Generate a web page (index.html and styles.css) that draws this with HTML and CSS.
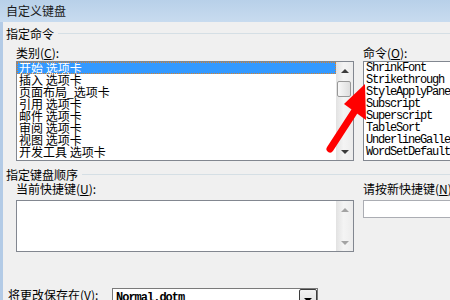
FILE: index.html
```html
<!DOCTYPE html>
<html lang="zh-CN">
<head>
    <meta charset="UTF-8">
    <title>自定义键盘</title>
    <link rel="stylesheet" href="styles.css">
</head>
<body>
    <div class="titlebar">自定义键盘</div>
    <div class="client">
        <div class="group-head">指定命令</div>
        <div class="fields">
            <div>
                <div class="label">类别(<u>C</u>):</div>
                <div class="listbox">
                    <ul class="items">
                        <li class="selected">开始 选项卡</li>
                        <li>插入 选项卡</li>
                        <li>页面布局_选项卡</li>
                        <li>引用 选项卡</li>
                        <li>邮件 选项卡</li>
                        <li>审阅 选项卡</li>
                        <li>视图 选项卡</li>
                        <li>开发工具 选项卡</li>
                    </ul>
                    <div class="vscroll">
                        <span class="btn"><i class="tri up"></i></span>
                        <span class="thumb"></span>
                        <span class="spacer"></span>
                        <span class="btn"><i class="tri down"></i></span>
                    </div>
                </div>
            </div>
            <div>
                <div class="label">命令(<u>O</u>):</div>
                <div class="listbox wide">
                    <ul class="items mono">
                        <li>ShrinkFont</li>
                        <li>Strikethrough</li>
                        <li>StyleApplyPane</li>
                        <li>Subscript</li>
                        <li>Superscript</li>
                        <li>TableSort</li>
                        <li>UnderlineGallery</li>
                        <li>WordSetDefaultFont</li>
                    </ul>
                </div>
            </div>
        </div>

        <div class="group-head second">指定键盘顺序</div>
        <div class="fields second">
            <div>
                <div class="label">当前快捷键(<u>U</u>):</div>
                <div class="listbox keys">
                    <div class="spacer"></div>
                    <div class="vscroll off">
                        <span class="btn"><i class="tri up"></i></span>
                        <span class="spacer"></span>
                        <span class="btn"><i class="tri down"></i></span>
                    </div>
                </div>
            </div>
            <div>
                <div class="label">请按新快捷键(<u>N</u>):</div>
                <div class="newkey"></div>
            </div>
        </div>

        <div class="save">
            <div class="save-label">将更改保存在(<u>V</u>):</div>
            <div class="combo">
                <span class="value">Normal.dotm</span>
                <span class="drop"><i class="tri down"></i></span>
            </div>
        </div>
    </div>

    <svg class="pointer" width="450" height="300" viewBox="0 0 450 300">
        <line x1="330" y1="149" x2="356" y2="109" stroke="#ff0000" stroke-width="7" stroke-linecap="round"/>
        <polygon points="365,84 344,104 366,120" fill="#ff0000"/>
    </svg>
</body>
</html>
```
FILE: styles.css
```css
* { box-sizing: border-box; }
html { overflow: hidden; }
body { margin: 0; width: 450px; height: 300px; overflow: hidden; position: relative; background: #f0f0f0; color: #000; font: 12px/12px "Noto Sans CJK SC", "Liberation Sans", sans-serif; }
u { text-decoration: underline; }

.titlebar { height: 22px; line-height: 22px; padding-left: 6px; background: linear-gradient(#b8d0e9, #c8dbef); color: #1a1a1a; }
/* the dialog goes on below the window edge, so clip it */
.client { height: 278px; overflow: hidden; border-left: 3px solid #b3cbe6; padding-left: 3px; }

.group-head { display: flex; align-items: center; gap: 4px; height: 13px; line-height: 13px; margin-top: 5px; }
.group-head::after { content: ""; flex: 1; border-top: 1px solid #d5dfe5; }
.group-head.second { margin-top: 7px; }

.fields { display: grid; grid-template-columns: 338px 1fr; column-gap: 9px; padding-left: 10px; }
.label { height: 12px; line-height: 12px; margin: 7px 0 2px; white-space: nowrap; }
.fields.second .label { margin-top: 2px; }

.listbox { display: flex; height: 100px; border: 1px solid #828790; background: #fff; overflow: hidden; }
.listbox.wide { margin-right: -30px; }
.listbox.keys { height: 52px; margin-top: 5px; }
.items { list-style: none; margin: 0; padding: 0; flex: 1; }
.items li { height: 12px; line-height: 12px; padding-left: 2px; white-space: nowrap; }
.items li.selected { background: #3399ff; color: #fff; outline: 1px dotted #d9822b; outline-offset: -1px; }
.mono li { font-family: "Liberation Mono", monospace; letter-spacing: -1.2px; }
.spacer { flex: 1; }

.vscroll { width: 17px; display: flex; flex-direction: column; background: linear-gradient(to right, #e2e2e2, #f4f4f4 45%, #ececec); }
.vscroll .btn { height: 17px; display: flex; align-items: center; justify-content: center; }
.tri { width: 0; height: 0; border-left: 4px solid transparent; border-right: 4px solid transparent; }
.tri.up { border-bottom: 4px solid #3c3c3c; }
.tri.down { border-top: 4px solid #3c3c3c; }
.vscroll.off .tri.up { border-bottom-color: #a3a3a3; }
.vscroll.off .tri.down { border-top-color: #a3a3a3; }
.thumb { height: 16px; margin: 2px 2px 0 1px; border: 1px solid #989898; border-radius: 2px; background: linear-gradient(to right, #f8f8f8, #dedede); }

.newkey { height: 18px; margin: 5px -30px 0 0; border: 1px solid #abadb3; background: #fff; }

.save { display: flex; align-items: flex-start; margin-top: 36px; }
.save-label { flex: 0 0 106px; padding: 1px 0 0 2px; white-space: nowrap; }
.combo { display: flex; width: 206px; height: 22px; border: 1px solid #7a7a7a; background: #fff; }
.combo .value { flex: 1; padding: 3px 0 0 3px; font-family: "Liberation Mono", monospace; font-weight: bold; letter-spacing: -1px; }
.combo .drop { width: 18px; display: flex; justify-content: center; padding-top: 8px; border: 1px solid #3c3c3c; border-radius: 2px; background: linear-gradient(#f2f2f2, #dcdcdc); }
.combo .drop .tri.down { border-top-color: #000; }

.pointer { position: absolute; top: 0; left: 0; pointer-events: none; }
```
